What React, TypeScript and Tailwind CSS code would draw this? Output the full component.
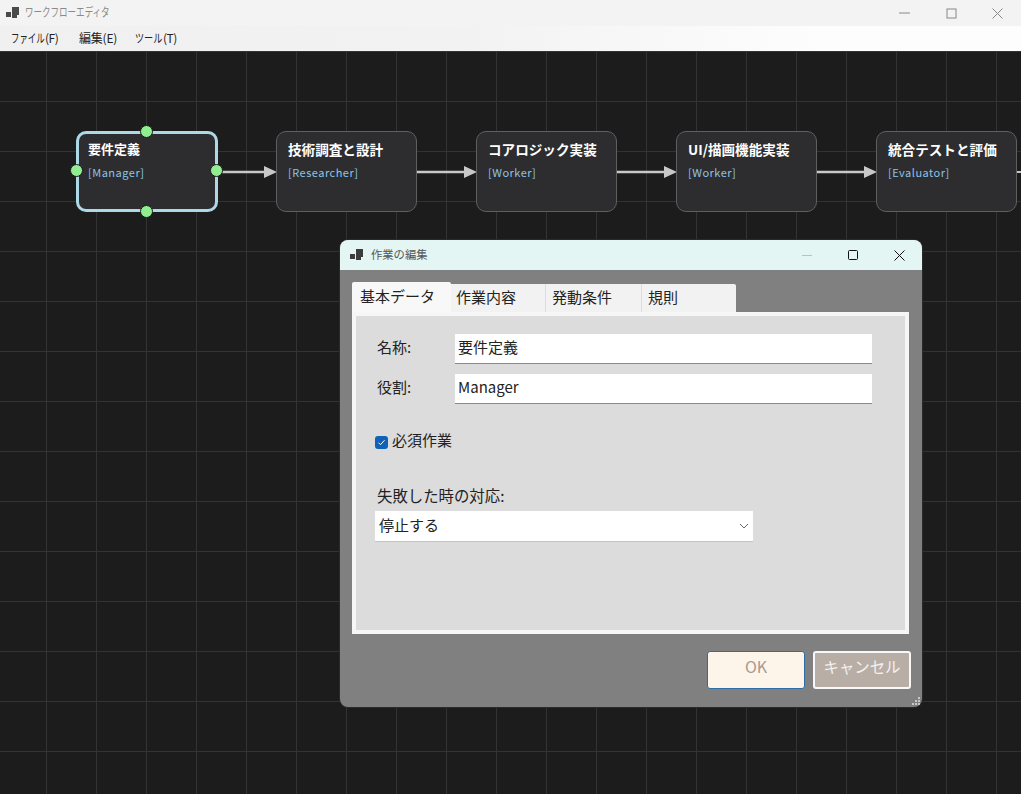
const jp = "font-['Noto_Sans_CJK_JP','Noto_Sans',sans-serif]";

const nodes = [
  { title: "要件定義", role: "[Manager]", x: "left-[76px]", selected: true },
  { title: "技術調査と設計", role: "[Researcher]", x: "left-[276px]" },
  { title: "コアロジック実装", role: "[Worker]", x: "left-[476px]" },
  { title: "UI/描画機能実装", role: "[Worker]", x: "left-[676px]" },
  { title: "統合テストと評価", role: "[Evaluator]", x: "left-[876px]" },
];

function AppIcon({ color }: { color: string }) {
  return (
    <svg width="14" height="12" viewBox="0 0 14 12" fill={color}>
      <rect x="0" y="5" width="5" height="5" />
      <rect x="6" y="0" width="7" height="8" />
      <rect x="6" y="8" width="5" height="3" />
    </svg>
  );
}

function Handle({ className }: { className: string }) {
  return <div className={`absolute h-[13px] w-[13px] rounded-full border border-[#1c1c1c] bg-[#90ee90] ${className}`} />;
}

function Node({ title, role, x, selected }: { title: string; role: string; x: string; selected?: boolean }) {
  return (
    <div
      className={`absolute top-[80px] h-[81px] rounded-[10px] bg-[#2d2d30] pt-[7px] pl-[11px] ${x} ${
        selected ? "w-[142px] border-[3px] border-[#add8e6]" : "w-[141px] border border-[#5f5f62]"
      }`}
    >
      <div
        className={`leading-[20px] font-bold whitespace-nowrap text-white ${
          selected ? "-mt-[2px] -ml-[2px] text-[13px]" : "text-[13.6px]"
        }`}
      >
        {title}
      </div>
      <div className={`mt-[4px] text-[11px] leading-[18px] tracking-[0.5px] text-[#8cc4e8] ${selected ? "-ml-[2px]" : ""}`}>{role}</div>
      {selected && (
        <>
          <Handle className="-top-[9px] left-[61px]" />
          <Handle className="-bottom-[9px] left-[61px]" />
          <Handle className="top-[30px] -left-[9px]" />
          <Handle className="top-[30px] -right-[8px]" />
        </>
      )}
    </div>
  );
}

function Arrow({ x, w }: { x: string; w: number }) {
  return (
    <svg className={`absolute top-[114px] ${x}`} width={w} height="14" viewBox={`0 0 ${w} 14`}>
      <line x1="0" y1="7" x2={w - 10} y2="7" stroke="#c8c8c8" strokeWidth="2.5" />
      <polygon points={`${w - 13},1 ${w},7 ${w - 13},13`} fill="#c8c8c8" />
    </svg>
  );
}

export default function App() {
  return (
    <div className={`flex h-[794px] w-[1021px] flex-col overflow-hidden bg-[#1c1c1c] ${jp}`}>
      {/* main title bar */}
      <div className="flex h-[26px] items-center bg-[#f3f3f3] pl-[6px] text-[#8a8a8a]">
        <AppIcon color="#4a4a4a" />
        <div className="ml-[5px] origin-left scale-x-[0.71] pb-[3px] text-[12px] whitespace-nowrap">ワークフローエディタ</div>
        <div className="ml-auto flex items-center pr-px">
          <div className="flex h-[26px] w-[46px] items-center justify-center">
            <svg width="12" height="12" viewBox="0 0 12 12"><line x1="0" y1="6" x2="11" y2="6" stroke="#888" /></svg>
          </div>
          <div className="flex h-[26px] w-[46px] items-center justify-center">
            <svg width="11" height="11" viewBox="0 0 11 11"><rect x="1" y="1" width="9" height="9" fill="none" stroke="#888" /></svg>
          </div>
          <div className="flex h-[26px] w-[46px] items-center justify-center">
            <svg width="11" height="11" viewBox="0 0 11 11"><path d="M.5.5l10 10M10.5.5l-10 10" stroke="#888" /></svg>
          </div>
        </div>
      </div>

      {/* menu */}
      <div className="flex h-[25px] items-center bg-[linear-gradient(to_right,#f0f0f0,#f2f2f2_45%,#fdfdfd_80%)] pb-[2px] pl-[11px] text-[12px] text-[#222]">
        <div className="flex w-[68px] whitespace-nowrap">
          <span className="w-[34px] origin-left scale-x-[0.7]">ファイル</span>
          <span className="tracking-[-0.5px]">(F)</span>
        </div>
        <div className="w-[56px] tracking-[-0.2px] whitespace-nowrap">編集(E)</div>
        <div className="flex whitespace-nowrap">
          <span className="w-[28px] origin-left scale-x-[0.76]">ツール</span>
          <span className="tracking-[-0.5px]">(T)</span>
        </div>
      </div>

      {/* canvas */}
      <div className="relative flex-1 bg-[#1c1c1c] bg-[linear-gradient(#333333_1px,transparent_1px),linear-gradient(to_right,#333333_1px,transparent_1px)] bg-[size:50px_50px] bg-[position:-4px_0px]">
        <Arrow x="left-[222px]" w={55} />
        <Arrow x="left-[417px]" w={60} />
        <Arrow x="left-[617px]" w={60} />
        <Arrow x="left-[817px]" w={60} />
        <div className="absolute top-[120px] left-[1017px] h-[2px] w-[4px] bg-[#c8c8c8]" />
        {nodes.map((n, i) => (
          <Node key={i} {...n} />
        ))}

        {/* dialog */}
        <div className="absolute top-[189px] left-[340px] flex h-[467px] w-[582px] flex-col overflow-hidden rounded-[8px] bg-[#808080] shadow-[0_0_0_1px_#2a2a2a]">
          <div className="flex h-[30px] shrink-0 items-center bg-[#e3f6f4] pl-[10px] text-[#555]">
            <AppIcon color="#3c3c3c" />
            <div className="ml-[7px] pb-[2px] text-[11.3px]">作業の編集</div>
            <div className="ml-auto flex items-center">
              <div className="flex w-[46px] justify-center">
                <svg width="11" height="3" viewBox="0 0 11 3"><line x1="0" y1="1.5" x2="10" y2="1.5" stroke="#b5c4c2" /></svg>
              </div>
              <div className="flex w-[46px] justify-center">
                <svg width="10" height="10" viewBox="0 0 10 10"><rect x=".5" y=".5" width="9" height="9" rx="1" fill="none" stroke="#111" /></svg>
              </div>
              <div className="flex w-[46px] justify-center">
                <svg width="11" height="11" viewBox="0 0 11 11"><path d="M.5.5l10 10M10.5.5l-10 10" stroke="#111" /></svg>
              </div>
            </div>
          </div>

          <div className="flex flex-1 flex-col pt-[12px] pr-[13px] pl-[12px]">
            {/* tabs */}
            <div className="flex h-[31px] items-end text-[15px] text-[#222]">
              <div className="h-[31px] w-[99px] rounded-t-[2px] bg-[#f8f8f8] pl-[8px] leading-[28px]">基本データ</div>
              <div className="h-[29px] w-[95px] border-r border-[#dcdcdc] bg-[#f2f2f2] pl-[5px] leading-[26px]">作業内容</div>
              <div className="h-[29px] w-[96px] border-r border-[#dcdcdc] bg-[#f2f2f2] pl-[6px] leading-[26px]">発動条件</div>
              <div className="h-[29px] w-[94px] rounded-tr-[2px] bg-[#f2f2f2] pl-[6px] leading-[26px]">規則</div>
            </div>

            {/* tab panel */}
            <div className="-mt-px h-[322px] w-[557px] border-[4px] border-[#f6f6f6] bg-[#dcdcdc] pt-[18px] pl-[21px] text-[15px] text-[#222]">
              <div className="flex h-[30px] items-center">
                <div className="w-[78px] pb-[3px]">名称:</div>
                <div className="flex h-[30px] w-[417px] items-center border-b border-[#8a8a8a] bg-white pb-[3px] pl-[3px]">要件定義</div>
              </div>
              <div className="mt-[10px] flex h-[30px] items-center">
                <div className="w-[78px] pb-[3px]">役割:</div>
                <div className="flex h-[30px] w-[417px] items-center border-b border-[#8a8a8a] bg-white pb-[3px] pl-[3px]">Manager</div>
              </div>

              <div className="mt-[26px] -ml-[2px] flex h-[22px] items-center">
                <div className="mt-[2px] flex h-[13px] w-[13px] items-center justify-center rounded-[3px] bg-[#0f62b8]">
                  <svg width="9" height="9" viewBox="0 0 9 9"><path d="M1.5 4.7l2 2 4-4.4" fill="none" stroke="#fff" /></svg>
                </div>
                <div className="ml-[4px] pb-[2px]">必須作業</div>
              </div>

              <div className="mt-[32px] mb-[5px] text-[15.4px] leading-[22px]">失敗した時の対応:</div>
              <div className="-ml-[2px] flex h-[31px] w-[378px] items-center justify-between border-b border-[#c4c4c4] bg-white pr-[4px] pl-[4px]">
                <span className="pb-[2px]">停止する</span>
                <svg width="10" height="6" viewBox="0 0 10 6"><path d="M1 1l4 4 4-4" fill="none" stroke="#666" /></svg>
              </div>
            </div>

            {/* buttons */}
            <div className="mt-[17px] -mr-[2px] flex justify-end gap-[8px]">
              <div className="flex h-[38px] w-[98px] items-center justify-center rounded-[3px] border border-[#2f6da8] bg-[#fdf4ea] pb-[8px] text-[16px] text-[#a89a90]">OK</div>
              <div className="flex h-[38px] w-[98px] items-center justify-center rounded-[3px] border-[2px] border-[#f8f8f8] bg-[#b9aea6] pb-[7px] text-[15.4px] text-[#f2f2f2]">キャンセル</div>
            </div>
          </div>

          {/* size grip */}
          <svg className="absolute right-[1px] bottom-[1px]" width="9" height="9" viewBox="0 0 9 9" fill="#c8c8c8">
            <rect x="6" y="0" width="2" height="2" />
            <rect x="3" y="3" width="2" height="2" />
            <rect x="6" y="3" width="2" height="2" />
            <rect x="0" y="6" width="2" height="2" />
            <rect x="3" y="6" width="2" height="2" />
            <rect x="6" y="6" width="2" height="2" />
          </svg>
        </div>
      </div>
    </div>
  );
}
